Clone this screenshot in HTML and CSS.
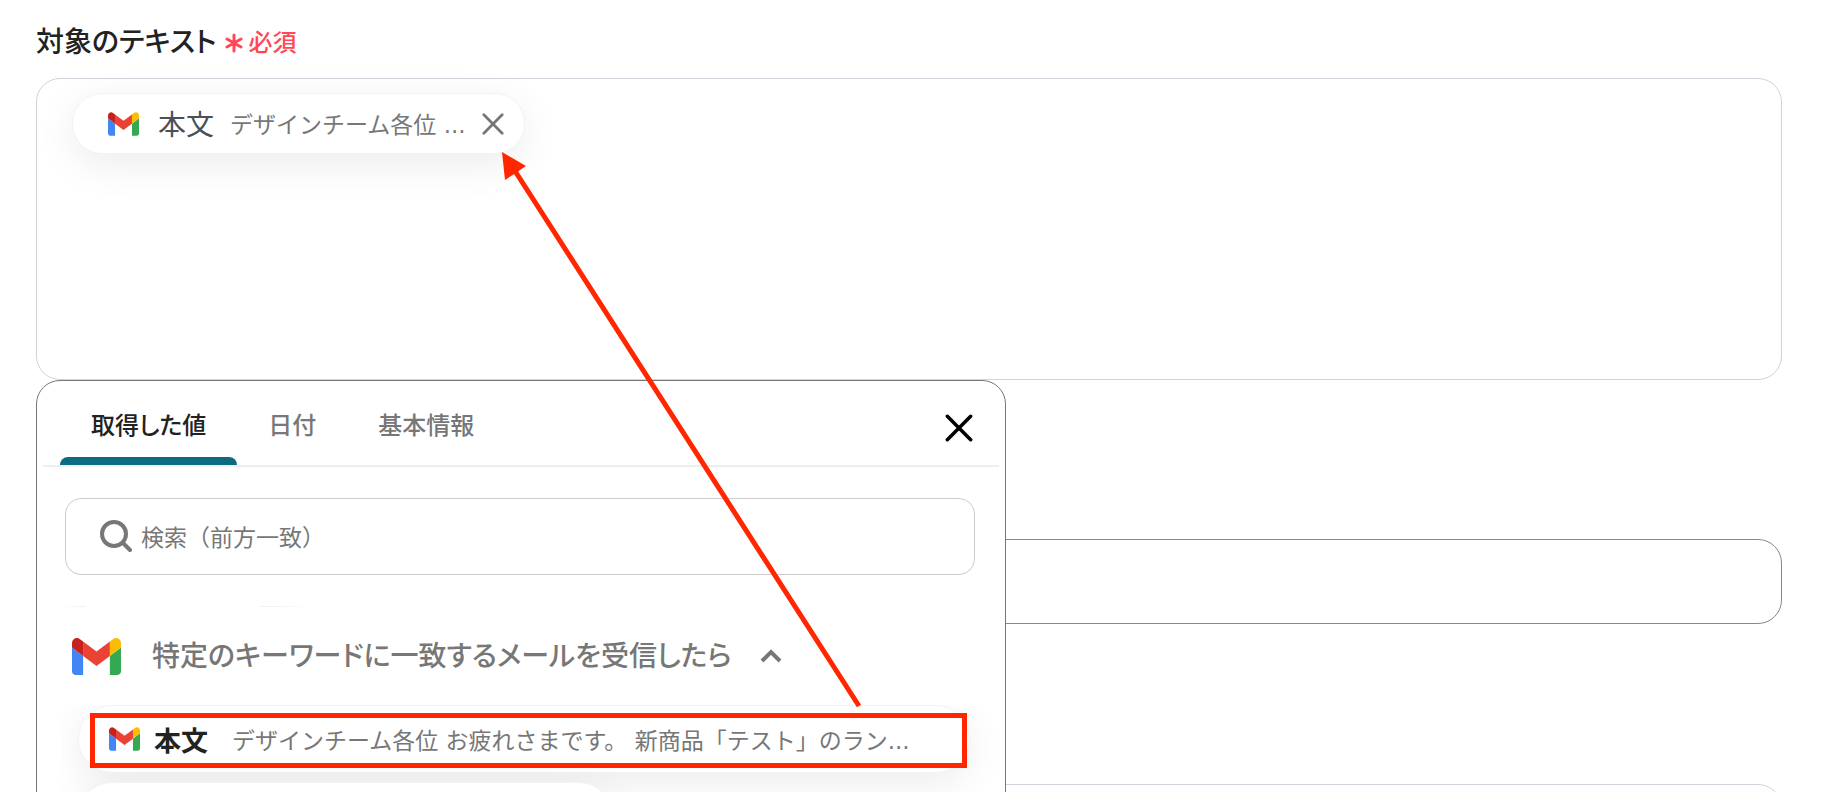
FILE: index.html
```html
<!DOCTYPE html>
<html lang="ja">
<head>
    <meta charset="UTF-8">
    <meta name="viewport" content="width=device-width, initial-scale=1.0">
    <title>対象のテキスト</title>
    <link rel="stylesheet" href="styles.css">
</head>
<body>
    <svg class="sprite" aria-hidden="true">
        <symbol id="gmail" viewBox="52 42 88 66">
            <path fill="#4285f4" d="M58 108h14V74L52 59v43c0 3.32 2.69 6 6 6"/>
            <path fill="#34a853" d="M120 108h14c3.32 0 6-2.69 6-6V59l-20 15"/>
            <path fill="#fbbc04" d="M120 48v26l20-15v-8c0-7.42-8.47-11.65-14.4-7.2"/>
            <path fill="#ea4335" d="M72 74V48l24 18 24-18v26L96 92"/>
            <path fill="#c5221f" d="M52 51v8l20 15V48l-5.600-4.200c-5.940-4.450-14.400-.220-14.400 7.200"/>
        </symbol>
        <symbol id="close" viewBox="0 0 24 24">
            <path d="M2 2l20 20M22 2L2 22" fill="none" stroke="currentColor" stroke-width="3" stroke-linecap="round"/>
        </symbol>
    </svg>

    <main class="page">
        <div class="field-label" id="target-label">
            <span>対象のテキスト</span>
            <svg class="asterisk" viewBox="0 0 18 20" aria-hidden="true"><path d="M9 2v16M2 6l14 8M16 6L2 14"/></svg>
            <span class="required">必須</span>
        </div>

        <div class="field">
            <div class="text-box" role="textbox" aria-labelledby="target-label">
                <div class="chip">
                    <svg class="gmail-small"><use href="#gmail"/></svg>
                    <span class="chip-name">本文</span>
                    <span class="chip-value">デザインチーム各位 ...</span>
                    <button class="chip-close" aria-label="削除"><svg><use href="#close"/></svg></button>
                </div>
            </div>

            <div class="panel">
                <div class="tabs" role="tablist">
                    <button class="tab active" role="tab" aria-selected="true">取得した値</button>
                    <button class="tab" role="tab">日付</button>
                    <button class="tab" role="tab">基本情報</button>
                    <button class="panel-close" aria-label="閉じる"><svg><use href="#close"/></svg></button>
                </div>
                <label class="search">
                    <svg viewBox="0 0 32 32" aria-hidden="true"><circle cx="14" cy="14" r="12"/><path d="M23 23l7 7"/></svg>
                    <input type="text" placeholder="検索（前方一致）" aria-label="検索（前方一致）">
                </label>
                <div class="hairline"></div>
                <button class="group">
                    <svg class="gmail-large"><use href="#gmail"/></svg>
                    <span class="group-name">特定のキーワードに一致するメールを受信したら</span>
                    <svg class="chevron" viewBox="0 0 22 14"><path d="M2 12l9-9 9 9"/></svg>
                </button>
                <div class="values">
                    <button class="value marked">
                        <svg class="gmail-small"><use href="#gmail"/></svg>
                        <span class="value-name">本文</span>
                        <span class="value-text">デザインチーム各位 お疲れさまです。 新商品「テスト」のラン...</span>
                    </button>
                    <button class="value short" aria-label="次の値"></button>
                </div>
            </div>
        </div>

        <input class="line-input" type="text" aria-label="入力">
        <textarea class="next-box" aria-label="テキスト"></textarea>

        <svg class="arrow" viewBox="0 0 360 556" aria-hidden="true">
            <path d="M13 19L357 554" stroke="#ff2600" stroke-width="5"/>
            <path d="M0 0l24 14-21 14z" fill="#ff2600"/>
        </svg>
    </main>
</body>
</html>
```
FILE: styles.css
```css
* {
    box-sizing: border-box;
}
body {
    margin: 0;
    background-color: #fff;
    color: #222;
    font-family: "Noto Sans CJK JP", sans-serif;
}
button, input, textarea {
    font-family: inherit;
    color: inherit;
}
button {
    border: none;
    background: none;
    padding: 0;
    cursor: pointer;
}
svg {
    display: block;
    flex: none;
}
.sprite {
    position: absolute;
    width: 0;
    height: 0;
}
.page {
    position: relative;
    height: 100vh;
    overflow: hidden;
    padding: 22px 44px 0 36px;
}
.field-label {
    display: flex;
    align-items: center;
    height: 36px;
    margin-bottom: 20px;
    font-size: 28px;
    font-weight: 500;
    font-feature-settings: "palt";
}
.asterisk {
    width: 18px;
    height: 20px;
    margin: 6px 6px 0 8px;
    fill: none;
    stroke: #ff4757;
    stroke-width: 3;
    stroke-linecap: round;
}
.required {
    color: #ff4757;
    font-size: 24px;
}
.field {
    position: relative;
    margin-bottom: 159px;
}
.text-box {
    min-height: 302px;
    padding: 14px 35px;
    border: 1px solid #ced4da;
    border-radius: 24px;
}
.chip {
    display: inline-flex;
    align-items: center;
    height: 61px;
    padding: 0 20px 0 35px;
    border: 1px solid #f3f3f3;
    border-radius: 30px;
    background-color: #fff;
    box-shadow: 0 10px 40px rgba(0, 0, 0, 0.08);
}
.gmail-small {
    width: 31px;
    height: 24px;
}
.chip-name {
    margin: 0 16px 0 19px;
    padding-bottom: 2px;
    color: #495057;
    font-size: 28px;
}
.chip-value {
    padding-bottom: 2px;
    color: #777;
    font-family: "DejaVu Sans", "Noto Sans CJK JP", sans-serif;
    font-size: 23px;
}
.chip-close {
    margin-left: 16px;
    color: #777;
}
.chip-close svg {
    width: 22px;
    height: 22px;
}
.panel {
    position: absolute;
    top: 100%;
    left: 0;
    width: 100%;
    max-width: 970px;
    height: 440px;
    border: 1px solid #777;
    border-radius: 24px;
    background-color: #fff;
    overflow: hidden;
}
.tabs {
    display: flex;
    height: 86px;
    margin: 0 6px;
    padding: 0 26px 0 17px;
    border-bottom: 2px solid #eee;
}
.tab {
    position: relative;
    padding: 0 31px;
    color: #777;
    font-size: 24px;
    font-weight: 500;
    font-feature-settings: "palt";
}
.tab.active {
    color: #222;
}
.tab.active::after {
    content: "";
    position: absolute;
    left: 0;
    right: 0;
    bottom: 0;
    height: 8px;
    border-radius: 8px 8px 0 0;
    background-color: #0b6b82;
}
.panel-close {
    margin-left: auto;
    padding-top: 10px;
    color: #000;
}
.panel-close svg {
    width: 28px;
    height: 28px;
}
.search {
    display: flex;
    align-items: center;
    height: 77px;
    margin: 31px 30px 0 28px;
    padding: 0 34px 2px;
    border: 1px solid #ccc;
    border-radius: 16px;
}
.search svg {
    width: 32px;
    height: 32px;
    margin-right: 9px;
    fill: none;
    stroke: #777;
    stroke-width: 4;
    stroke-linecap: round;
}
.search input {
    flex: 1;
    padding: 0;
    border: none;
    outline: none;
    background: none;
    font-size: 23px;
}
.search input::placeholder {
    color: #777;
    opacity: 1;
}
/* edge of the scrolled-out row above the group */
.hairline {
    height: 1px;
    margin: 31px 24px 0;
    background: linear-gradient(to right, #fff, #eee 24px, #fff 24px, #fff 199px, #eee 199px, #fff 250px);
}
.group {
    display: flex;
    align-items: center;
    height: 98px;
    padding-left: 35px;
    color: #777;
    font-size: 28px;
    font-weight: 500;
    font-feature-settings: "palt";
}
.group-name {
    padding-bottom: 4px;
}
.gmail-large {
    width: 49px;
    height: 37px;
    margin-right: 31px;
}
.chevron {
    width: 22px;
    height: 14px;
    margin-left: 28px;
    fill: none;
    stroke: #777;
    stroke-width: 4;
}
.values {
    height: 140px;
    padding: 0 28px 0 17px;
    margin: 0 7px 0 24px;
    overflow: hidden;
}
.value {
    position: relative;
    display: flex;
    align-items: center;
    width: 100%;
    height: 68px;
    margin-bottom: 9px;
    padding-left: 30px;
    border: 1px solid #f3f3f3;
    border-radius: 34px;
    background-color: #fff;
    box-shadow: 0 10px 40px rgba(0, 0, 0, 0.08);
}
.value.short {
    width: 60%;
}
.value-name {
    margin: 0 24px 0 14px;
    font-size: 27px;
    font-weight: 700;
}
.value-text {
    color: #777;
    font-family: "DejaVu Sans", "Noto Sans CJK JP", sans-serif;
    font-size: 23px;
    white-space: nowrap;
}
.marked::after {
    content: "";
    position: absolute;
    inset: 7px 2px 4px 11px;
    border: 5px solid #ff2600;
}
.line-input {
    display: block;
    width: 100%;
    height: 85px;
    border: 1px solid #888;
    border-radius: 24px;
}
.next-box {
    display: block;
    width: 100%;
    height: 302px;
    margin-top: 160px;
    border: 1px solid #ced4da;
    border-radius: 24px;
    resize: none;
}
.arrow {
    position: absolute;
    left: 502px;
    top: 152px;
    width: 360px;
    height: 556px;
}
```
